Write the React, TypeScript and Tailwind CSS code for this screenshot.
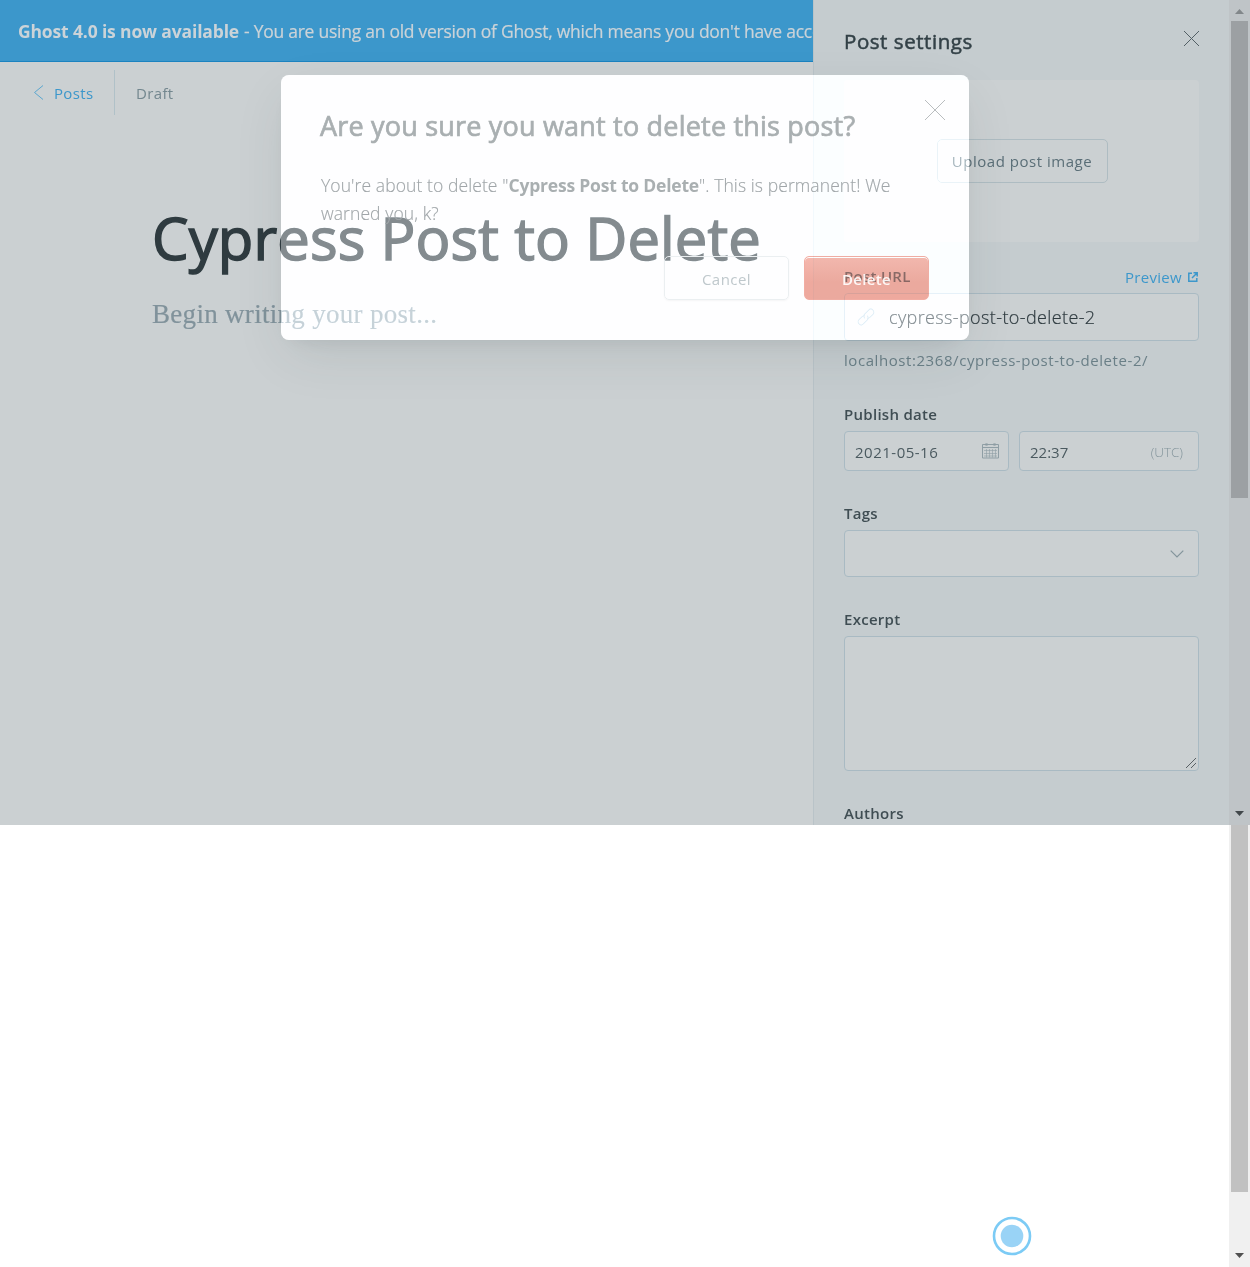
import React from "react";

function Cross({ className }: { className: string }) {
  return (
    <svg viewBox="0 0 20 20" className={className} fill="none" stroke="currentColor" preserveAspectRatio="none">
      <path d="M0 0 20 20M20 0 0 20" vectorEffect="non-scaling-stroke" />
    </svg>
  );
}

function Arrow({ up = false, className }: { up?: boolean; className: string }) {
  return (
    <svg viewBox="0 0 9 5" className={className} fill="currentColor">
      <path d={up ? "M0 5 4.5 0 9 5z" : "M0 0h9L4.5 5z"} />
    </svg>
  );
}

function Label({ children }: { children: React.ReactNode }) {
  return <div className="h-[21px] text-[15px] leading-5 font-semibold tracking-[0.28px] text-[#3f4d53]">{children}</div>;
}

function Banner() {
  return (
    <div className="h-[62px] overflow-hidden border-b border-[#1c83c0] bg-[#3c97cb] pl-[18px] text-[17.5px] leading-[63px] whitespace-nowrap text-[#cbd3d8]">
      <b className="tracking-[-0.15px]">Ghost 4.0 is now available</b>
      <span className="ml-[5px] tracking-[-0.26px] [-webkit-text-stroke:0.2px]">- You are using an old version of Ghost, which means you don't have access to the latest features</span>
    </div>
  );
}

function Editor() {
  return (
    <main className="h-[825px] w-[813px] overflow-hidden bg-[#cbd0d2]">
      <Banner />
      <div className="flex h-[61px] items-center pl-[34px] text-[15px] tracking-[0.35px]">
        <svg viewBox="0 0 9 15" className="h-[15px] w-[9px] text-[#5ba6cf]" fill="none" stroke="currentColor">
          <path d="M9 .5.5 7.5 9 14.5" />
        </svg>
        <span className="ml-[11px] w-[49px] pt-0.5 text-[#3c97cb]">Posts</span>
        <span className="ml-[11px] h-[45px] w-px bg-[#b0c1c8]" />
        <span className="ml-[21px] pt-0.5 text-[#73878f]">Draft</span>
      </div>
      <h1 className="mt-[75px] pl-[152px] text-[58px] leading-[80px] tracking-[0.11px] whitespace-nowrap text-[#2f3b40] [-webkit-text-stroke:1.5px]">Cypress Post to Delete</h1>
      <p className="mt-[20px] pl-[152px] font-['Liberation_Serif',serif] text-[27px] leading-8 tracking-[0.3px] text-[#80929b] [-webkit-text-stroke:0.2px]">Begin writing your post...</p>
    </main>
  );
}

function Calendar() {
  return (
    <svg viewBox="0 0 17 16" className="h-4 w-[17px] text-[#8f9ea5]" fill="none" stroke="currentColor">
      <path d="M.5 1.5h16v13.5H.5zM.5 4.5h16" />
      <path d="M2 7.5h13M2 10.5h13M2 13h13M4.5 6v8.5M7.5 6v8.5M10.5 6v8.5M13.5 6v8.5" strokeWidth=".6" />
      <path d="M3 1.5c0-1.2 3-1.2 3 0s-3 1.2-3 0M11 1.5c0-1.2 3-1.2 3 0s-3 1.2-3 0" strokeWidth=".8" />
    </svg>
  );
}

function Settings() {
  return (
    <aside className="h-[825px] w-[416px] overflow-hidden border-l border-[#b9c3c8] bg-[#c5cccf] pr-[30px] pl-[30px]">
      <div className="flex h-20 justify-between pt-[26px]">
        <h2 className="text-[20.5px] leading-[30px] tracking-[0.55px] text-[#334147] [-webkit-text-stroke:0.5px]">Post settings</h2>
        <Cross className="mt-[5px] size-[15px] text-[#536066]" />
      </div>
      <div className="flex h-[162px] items-center justify-center rounded bg-[#cbd0d2] pl-px">
        <button className="h-11 w-[171px] rounded-[5px] border border-[#aebcc2] text-[15px] tracking-[0.52px] whitespace-nowrap text-[#5a6e77]">Upload post image</button>
      </div>
      <div className="mt-[24px] flex justify-between">
        <Label>Post URL</Label>
        <div className="flex items-center pt-px text-[15px] leading-5 tracking-[0.3px] text-[#3c97cb]">
          Preview
          <svg viewBox="0 0 10 10" className="mr-px mb-px ml-[6px] size-[10px]" fill="none" stroke="currentColor" strokeWidth="1.5">
            <path d="M4 1.2H.8v8h8V6M5.5.8h3.7v3.7M9 1 4 6" />
          </svg>
        </div>
      </div>
      <div className="mt-[6px] flex h-12 items-center rounded border border-[#a9bac3] bg-[#cbd0d2] pl-3">
        <svg viewBox="0 0 24 24" className="size-[18px] text-[#a3b5c0]" fill="none" stroke="currentColor" strokeWidth="1.5">
          <path d="M10.5 13.8a4 4 0 0 1-.3-5.7l5.4-5.4a4 4 0 0 1 5.7 5.7l-4.2 4.2a4 4 0 0 1-3.6 1" />
          <path d="M13.5 10.2a4 4 0 0 1 .3 5.7l-5.4 5.4a4 4 0 0 1-5.7-5.7l4.2-4.2a4 4 0 0 1 3.6-1" />
        </svg>
        <span className="ml-[14px] text-[18px] font-light tracking-[0.38px] text-[#2f3b40] [-webkit-text-stroke:0.2px]">cypress-post-to-delete-2</span>
      </div>
      <div className="mt-[9px] text-[15px] leading-5 tracking-[0.57px] whitespace-nowrap text-[#6a7f87]">localhost:2368/cypress-post-to-delete-2/</div>
      <div className="mt-[34px]">
        <Label>Publish date</Label>
      </div>
      <div className="mt-[6px] flex gap-[10px] text-[15px] text-[#4b5a60]">
        <div className="flex h-10 w-[165px] items-center justify-between rounded border border-[#a9bac3] bg-[#cbd0d2] pr-[9px] pl-[10px]">
          <span className="pt-0.5 tracking-[0.5px]">2021-05-16</span>
          <Calendar />
        </div>
        <div className="flex h-10 w-[180px] items-center justify-between rounded border border-[#a9bac3] bg-[#cbd0d2] pr-[15px] pl-[10px]">
          <span className="pt-0.5">22:37</span>
          <span className="pt-0.5 text-[13.5px] font-light tracking-[-0.05px] text-[#83949b]">(UTC)</span>
        </div>
      </div>
      <div className="mt-[32px]">
        <Label>Tags</Label>
      </div>
      <div className="mt-[6px] flex h-[47px] items-center justify-end rounded border border-[#a9bac3] bg-[#cbd0d2] pr-[14px]">
        <svg viewBox="0 0 14 8" className="h-2 w-[14px] text-[#83949b]" fill="none" stroke="currentColor" strokeWidth="1.2">
          <path d="m.7.7 6.3 6.3L13.3.7" />
        </svg>
      </div>
      <div className="mt-[32px]">
        <Label>Excerpt</Label>
      </div>
      <div className="mt-[6px] flex h-[135px] items-end justify-end rounded border border-[#a9bac3] bg-[#cbd0d2] p-[2px]">
        <svg viewBox="0 0 10 10" className="size-[10px] text-[#4c5357]" fill="none" stroke="currentColor" strokeWidth=".9">
          <path d="M0 10 10 0M5 10l5-5" />
        </svg>
      </div>
      <div className="mt-[32px]">
        <Label>Authors</Label>
      </div>
    </aside>
  );
}

function Scrollbars() {
  return (
    <div className="w-[21px]">
      <div className="flex h-[825px] flex-col items-center bg-[#bfc4c7]">
        <div className="flex h-[21px] items-center justify-center pt-[2px]">
          <Arrow up className="h-[5px] w-[9px] text-[#82878a]" />
        </div>
        <div className="h-[477px] w-[17px] bg-[#9ca0a3]" />
        <Arrow className="mt-auto mb-[9px] h-[5px] w-[9px] text-[#42484b]" />
      </div>
      <div className="flex h-[442px] flex-col items-center bg-[#f0f0f0]">
        <div className="h-[367px] w-[17px] bg-[#c1c1c1]" />
        <Arrow className="mt-auto mb-[9px] h-[5px] w-[9px] text-[#505050]" />
      </div>
    </div>
  );
}

function DeleteModal() {
  return (
    <div className="absolute top-[75px] left-[281px] h-[265px] w-[688px]">
      <div className="absolute inset-0 rounded-lg bg-[#fdfdff]/37 shadow-[0_18px_50px_-8px_rgba(50,60,65,0.13),0_8px_20px_-10px_rgba(50,60,65,0.1)] backdrop-brightness-[1.27] backdrop-saturate-[0.8]" />
      <div className="relative px-10 pt-[33px] text-[#a9afb1]">
        <div className="flex justify-between">
          <h2 className="-ml-px text-[27px] leading-9 tracking-[0.2px] whitespace-nowrap [-webkit-text-stroke:0.7px]">Are you sure you want to delete this post?</h2>
          <Cross className="-mt-2 -mr-4 size-5 text-[#b9bdbf]" />
        </div>
        <p className="mt-[27px] text-[17.5px] leading-7 font-light tracking-[0.09px] whitespace-nowrap text-[#a0a6a9] [-webkit-text-stroke:0.15px]">
          You're about to delete "<b className="font-bold tracking-[-0.2px] text-[#a9afb1] [-webkit-text-stroke:0]">Cypress Post to Delete</b>". This is permanent! We
          <br />
          warned you, k?
        </p>
        <div className="mt-[29px] flex justify-end gap-[15px] text-[15px] tracking-[0.45px]">
          <button className="h-11 w-[125px] rounded-[5px] border border-[#ebeff1] pt-0.5 text-[#bfc8cc] shadow-[0_1px_2px_rgba(0,0,0,0.04)]">Cancel</button>
          <div className="grid h-11 w-[125px]">
            <div className="col-start-1 row-start-1 rounded-[5px] border border-[#f3aea3] bg-linear-to-b from-[#f6b9ae] to-[#efaa9e] to-60% mix-blend-multiply shadow-[inset_0_1px_0_#fff]" />
            <button className="relative col-start-1 row-start-1 pt-0.5 font-semibold tracking-[0.3px] text-white/90">Delete</button>
          </div>
        </div>
      </div>
    </div>
  );
}

export default function App() {
  return (
    <div className="relative flex h-[1267px] w-[1250px] overflow-hidden bg-white font-['Open_Sans',sans-serif]">
      <Editor />
      <Settings />
      <Scrollbars />
      <DeleteModal />
      <svg viewBox="0 0 40 40" className="absolute top-[1216px] left-[992px] size-10">
        <circle cx="20" cy="20" r="18" fill="none" stroke="#7ccbf5" strokeWidth="2.6" />
        <circle cx="20" cy="20" r="11.3" fill="#99d3f6" />
      </svg>
    </div>
  );
}
